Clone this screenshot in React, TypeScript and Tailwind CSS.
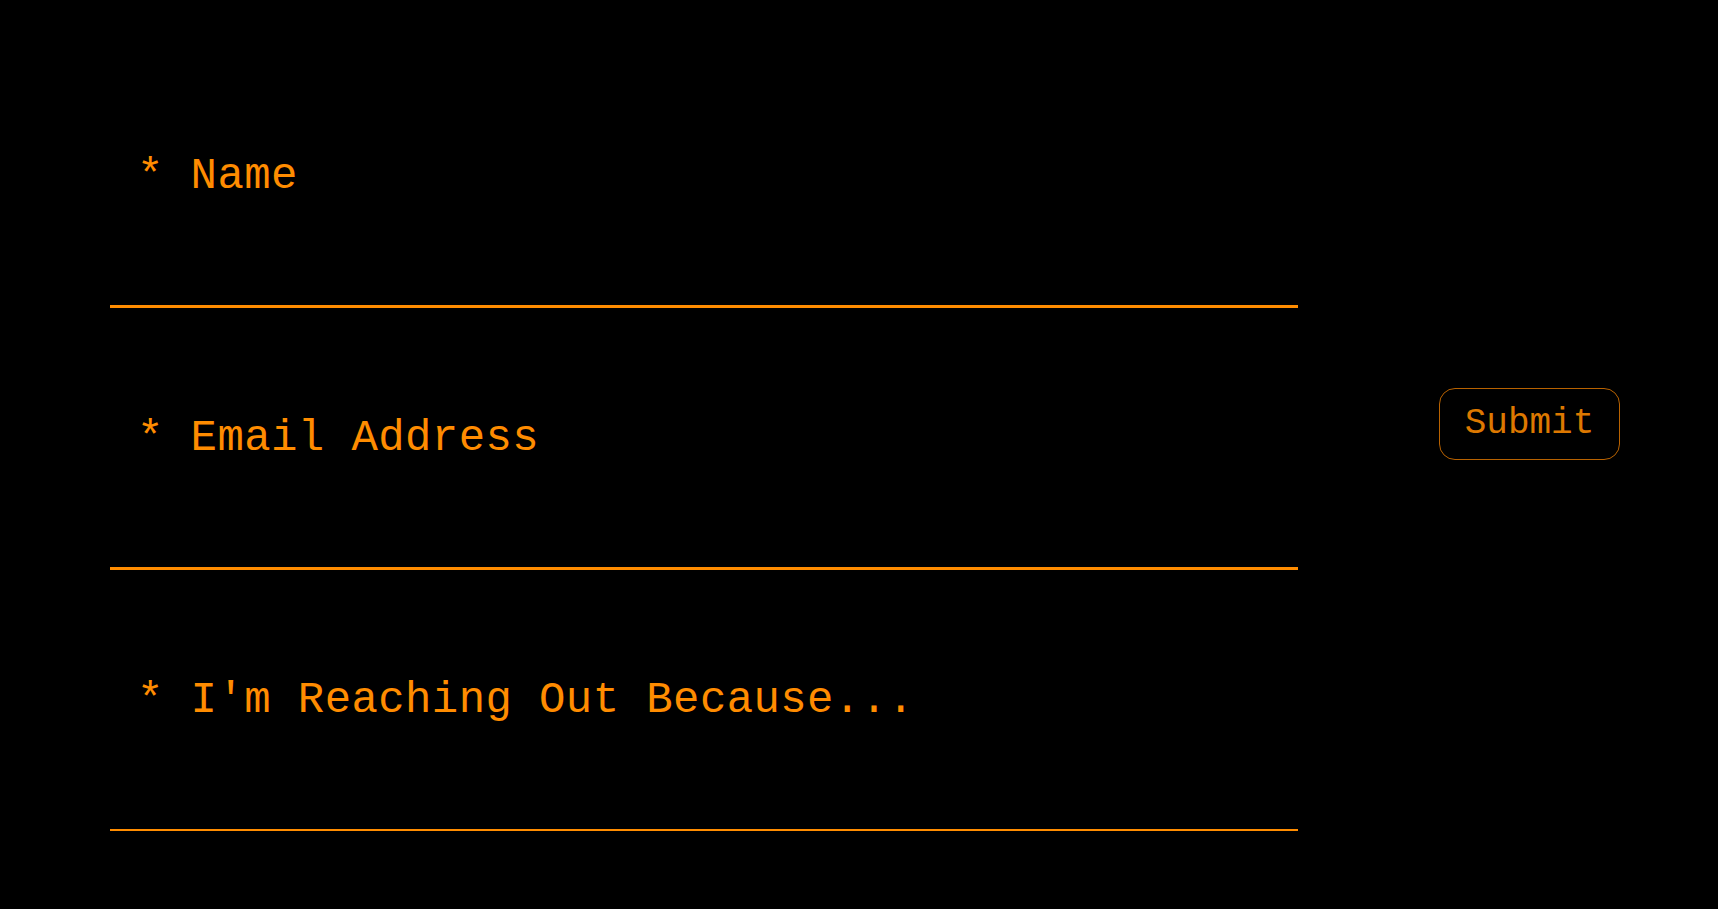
import React, { useState } from 'react';

const fields = [
    { key: 'name', placeholder: '* Name', type: 'text', box: 'h-[262px] border-b-[3px]' },
    { key: 'email', placeholder: '* Email Address', type: 'email', box: 'h-[262px] border-b-[3px]' },
    { key: 'reason', placeholder: "* I'm Reaching Out Because...", type: 'text', box: 'h-[261px] border-b-2' },
];

const App: React.FC = () => {
    const [values, setValues] = useState<Record<string, string>>({ name: '', email: '', reason: '' });

    const handleChange = (key: string, value: string) => {
        setValues(prev => ({ ...prev, [key]: value }));
    };

    return (
        <div className="min-h-[909px] w-full bg-black font-['Liberation_Mono',monospace] text-[#ff8c00]">
            <form className="flex items-start pt-[46px]" onSubmit={(e) => e.preventDefault()}>
                {/* Fields */}
                <div className="ml-[110px] w-[1188px] flex flex-col">
                    {fields.map((f) => (
                        <div key={f.key} className={`${f.box} border-[#ff8c00] pt-[1px]`}>
                            <input
                                type={f.type}
                                value={values[f.key]}
                                onChange={(e) => handleChange(f.key, e.target.value)}
                                placeholder={f.placeholder}
                                className="w-full h-full bg-transparent outline-none pl-[27px] text-[44px] tracking-[0.4px] text-[#ff8c00] placeholder:text-[#ff8c00]"
                            />
                        </div>
                    ))}
                </div>

                {/* Submit */}
                <button
                    type="submit"
                    className="ml-[141px] mt-[342px] w-[181px] h-[72px] rounded-[16px] border border-[#b86200] text-[36px] text-[#dd7800] flex items-center justify-center"
                >
                    Submit
                </button>
            </form>
        </div>
    );
};

export default App;
